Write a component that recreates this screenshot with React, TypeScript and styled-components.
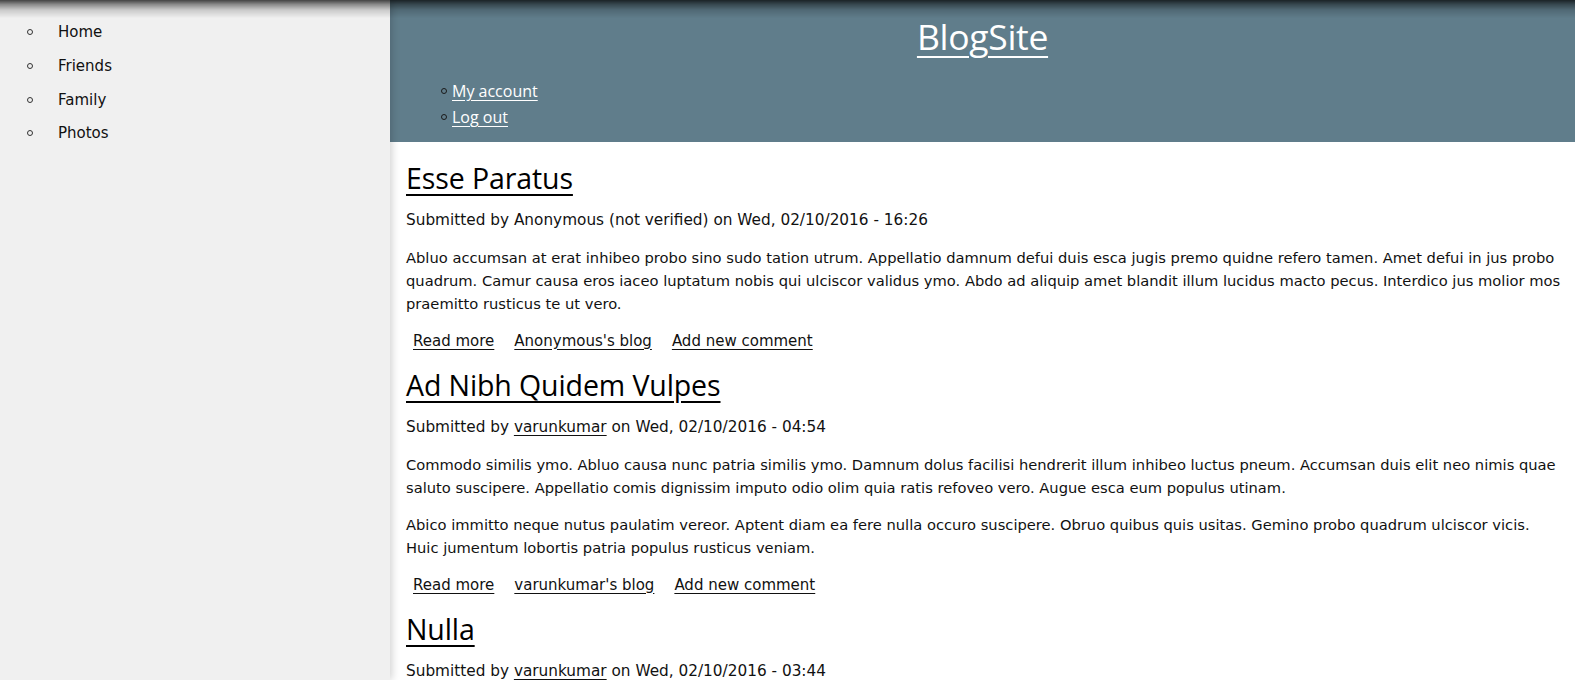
import React from "react";
import styled, { createGlobalStyle } from "styled-components";

const GlobalStyle = createGlobalStyle`
  html, body { margin: 0; padding: 0; background: #fff; }
  body { font-family: "DejaVu Sans", Verdana, sans-serif; color: #111; }
  * { box-sizing: border-box; }
`;

const Page = styled.div`
  display: grid;
  grid-template-columns: 390px 1fr;
  height: 100vh;
  overflow: hidden;
`;

const TopShade = styled.div`
  position: fixed;
  top: 0;
  left: 0;
  right: 0;
  height: 18px;
  pointer-events: none;
  z-index: 5;
  background: linear-gradient(
    to bottom,
    rgba(0, 0, 0, 0.72) 0%,
    rgba(0, 0, 0, 0.42) 25%,
    rgba(0, 0, 0, 0.16) 55%,
    rgba(0, 0, 0, 0) 100%
  );
`;

const Sidebar = styled.aside`
  position: relative;
  z-index: 2;
  background: #f0f0f0;
  box-shadow: 2px 0 8px rgba(0, 0, 0, 0.18);
`;

const SideList = styled.ul`
  list-style: none;
  margin: 0;
  padding: 22px 0 0 27px;
`;

const Bullet = styled.span<{ $dark?: boolean }>`
  flex: none;
  width: 6px;
  height: 6px;
  border-radius: 50%;
  border: 1.3px solid ${(p) => (p.$dark ? "#1a1a1a" : "#333")};
`;

const SideItem = styled.li`
  display: flex;
  align-items: center;
  gap: 25px;
  height: 20px;
  margin-bottom: 13.8px;
  font-size: 15px;
  color: #111;
`;

const Main = styled.main`
  min-width: 0;
  overflow: hidden;
`;

const Header = styled.header`
  height: 142px;
  background: #607d8b;
  display: flex;
  flex-direction: column;
  padding-top: 12px;
`;

const SiteTitle = styled.a`
  align-self: center;
  font-family: "Open Sans", "Noto Sans", sans-serif;
  font-size: 35.5px;
  line-height: 48px;
  color: #fff;
  text-decoration: underline;
  text-underline-offset: 6px;
  text-decoration-thickness: 2px;
  letter-spacing: -0.3px;
`;

const HeaderList = styled.ul`
  list-style: none;
  margin: 21px 0 0 0;
  padding: 0 0 0 51px;
  display: flex;
  flex-direction: column;
  gap: 6px;
`;

const HeaderItem = styled.li`
  display: flex;
  align-items: center;
  gap: 5px;
  height: 20px;
`;

const HeaderLink = styled.a`
  font-family: "Open Sans", "Noto Sans", sans-serif;
  font-size: 16px;
  color: #fff;
  text-decoration: underline;
  text-underline-offset: 3px;
`;

const Content = styled.div`
  padding: 19px 11px 0 16px;
`;

const Post = styled.article`
  margin-bottom: 17.5px;
`;

const PostTitle = styled.h2`
  margin: 0 0 14.5px 0;
  font-family: "Open Sans", "Noto Sans", sans-serif;
  font-weight: 400;
  font-size: 28.5px;
  line-height: 34px;
  letter-spacing: -0.1px;
  a {
    color: #000;
    text-decoration: underline;
    text-underline-offset: 5px;
    text-decoration-thickness: 2px;
  }
`;

const Meta = styled.div`
  font-size: 15.3px;
  line-height: 21px;
  margin-bottom: 15px;
  a { color: #111; text-decoration: underline; text-underline-offset: 3px; }
`;

const Para = styled.p`
  margin: 0 0 14px 0;
  font-size: 14.7px;
  line-height: 23px;
  &:last-of-type { margin-bottom: 16px; }
`;

const Links = styled.ul`
  list-style: none;
  margin: 0;
  padding: 0 0 0 7px;
  display: flex;
  gap: 20px;
  font-size: 15px;
  line-height: 20px;
  a { color: #111; text-decoration: underline; text-underline-offset: 3px; }
`;

type PostData = {
  title: string;
  author: string;
  linked: boolean;
  date: string;
  paras: string[];
  blog: string;
};

const posts: PostData[] = [
  {
    title: "Esse Paratus",
    author: "Anonymous (not verified)",
    linked: false,
    date: "Wed, 02/10/2016 - 16:26",
    paras: [
      "Abluo accumsan at erat inhibeo probo sino sudo tation utrum. Appellatio damnum defui duis esca jugis premo quidne refero tamen. Amet defui in jus probo quadrum. Camur causa eros iaceo luptatum nobis qui ulciscor validus ymo. Abdo ad aliquip amet blandit illum lucidus macto pecus. Interdico jus molior mos praemitto rusticus te ut vero.",
    ],
    blog: "Anonymous's blog",
  },
  {
    title: "Ad Nibh Quidem Vulpes",
    author: "varunkumar",
    linked: true,
    date: "Wed, 02/10/2016 - 04:54",
    paras: [
      "Commodo similis ymo. Abluo causa nunc patria similis ymo. Damnum dolus facilisi hendrerit illum inhibeo luctus pneum. Accumsan duis elit neo nimis quae saluto suscipere. Appellatio comis dignissim imputo odio olim quia ratis refoveo vero. Augue esca eum populus utinam.",
      "Abico immitto neque nutus paulatim vereor. Aptent diam ea fere nulla occuro suscipere. Obruo quibus quis usitas. Gemino probo quadrum ulciscor vicis. Huic jumentum lobortis patria populus rusticus veniam.",
    ],
    blog: "varunkumar's blog",
  },
  {
    title: "Nulla",
    author: "varunkumar",
    linked: true,
    date: "Wed, 02/10/2016 - 03:44",
    paras: [
      "Aliquam capto conventio dolor esse gemino hos iriure jugis pecus. Caecus eros feugiat ille neque quidne refoveo sed wisi.",
    ],
    blog: "varunkumar's blog",
  },
];

export default function App() {
  return (
    <>
      <GlobalStyle />
      <TopShade />
      <Page>
        <Sidebar>
          <SideList>
            {["Home", "Friends", "Family", "Photos"].map((n) => (
              <SideItem key={n}>
                <Bullet />
                {n}
              </SideItem>
            ))}
          </SideList>
        </Sidebar>
        <Main>
          <Header>
            <SiteTitle href="#">BlogSite</SiteTitle>
            <HeaderList>
              {["My account", "Log out"].map((n) => (
                <HeaderItem key={n}>
                  <Bullet $dark />
                  <HeaderLink href="#">{n}</HeaderLink>
                </HeaderItem>
              ))}
            </HeaderList>
          </Header>
          <Content>
            {posts.map((p) => (
              <Post key={p.title}>
                <PostTitle>
                  <a href="#">{p.title}</a>
                </PostTitle>
                <Meta>
                  Submitted by {p.linked ? <a href="#">{p.author}</a> : p.author} on {p.date}
                </Meta>
                {p.paras.map((t, i) => (
                  <Para key={i}>{t}</Para>
                ))}
                <Links>
                  <li><a href="#">Read more</a></li>
                  <li><a href="#">{p.blog}</a></li>
                  <li><a href="#">Add new comment</a></li>
                </Links>
              </Post>
            ))}
          </Content>
        </Main>
      </Page>
    </>
  );
}
